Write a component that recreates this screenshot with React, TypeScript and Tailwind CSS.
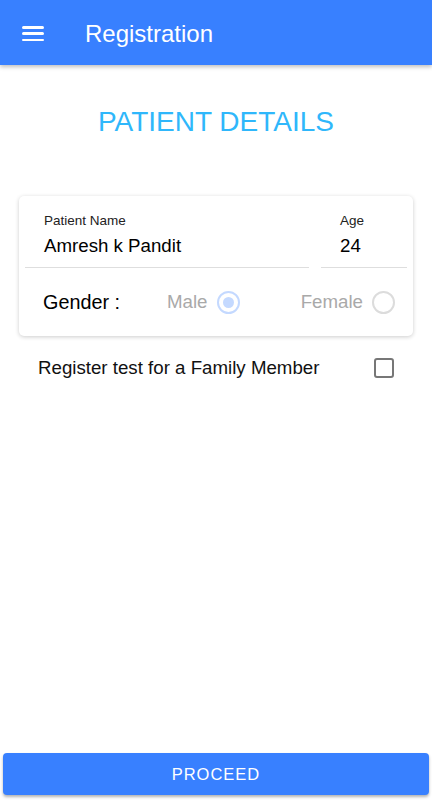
import { useState } from "react";

export default function App() {
  const [gender, setGender] = useState("male");
  const [family, setFamily] = useState(false);

  return (
    <div className="relative flex h-[800px] w-[432px] flex-col bg-white font-['Liberation_Sans',Arial,sans-serif]">
      {/* Header */}
      <div className="z-10 flex h-[65px] items-center bg-[#3880ff] pt-[2px] shadow-[0_2px_4px_rgba(0,0,0,0.25)]">
        <button className="ml-[22px] flex h-[15px] w-[22px] flex-col justify-between">
          <span className="h-[2.5px] w-full rounded bg-white" />
          <span className="h-[2.5px] w-full rounded bg-white" />
          <span className="h-[2.5px] w-full rounded bg-white" />
        </button>
        <h1 className="ml-[41px] text-[24px] leading-none text-white">Registration</h1>
      </div>

      {/* Body */}
      <div className="flex flex-1 flex-col">
        <h2 className="mt-[43px] text-center text-[28px] leading-none text-[#2fb7fb]">PATIENT DETAILS</h2>

        <div className="mx-[19px] mt-[60px] rounded-[5px] bg-white pb-[22px] shadow-[0_1px_4px_rgba(0,0,0,0.2)]">
          <div className="flex gap-[12px] px-[6px] pt-[18px]">
            <div className="flex-1 border-b border-[#dedede] pb-[12px] pl-[19px]">
              <div className="text-[13.5px] leading-none text-[#222]">Patient Name</div>
              <div className="mt-[9px] text-[18.7px] leading-none text-black">Amresh k Pandit</div>
            </div>
            <div className="w-[86px] border-b border-[#dedede] pb-[12px] pl-[19px]">
              <div className="text-[13.5px] leading-none text-[#222]">Age</div>
              <div className="mt-[9px] text-[18.7px] leading-none text-black">24</div>
            </div>
          </div>

          <div className="mt-[23px] flex items-center pl-[24px] pr-[18px]">
            <span className="text-[19.8px] leading-none text-black">Gender :</span>
            <button onClick={() => setGender("male")} className="ml-[47px] flex items-center gap-[9px]">
              <span className="text-[18.7px] leading-none text-[#a9a9a9]">Male</span>
              <span className="flex h-[23px] w-[23px] items-center justify-center rounded-full border-2 border-[#c4d9ff]">
                {gender === "male" && <span className="h-[11px] w-[11px] rounded-full bg-[#c4d9ff]" />}
              </span>
            </button>
            <button onClick={() => setGender("female")} className="ml-auto flex items-center gap-[9px]">
              <span className="text-[18.7px] leading-none text-[#a9a9a9]">Female</span>
              <span className="flex h-[23px] w-[23px] items-center justify-center rounded-full border-2 border-[#dcdcdc]">
                {gender === "female" && <span className="h-[11px] w-[11px] rounded-full bg-[#c4d9ff]" />}
              </span>
            </button>
          </div>
        </div>

        <div className="mt-[22px] flex items-center pl-[38px] pr-[38px]">
          <span className="text-[18.7px] leading-none text-[#111]">Register test for a Family Member</span>
          <button
            onClick={() => setFamily(!family)}
            className={`ml-auto h-[20px] w-[20px] rounded-[3px] border-2 border-[#777] ${family ? "bg-[#3880ff]" : ""}`}
          />
        </div>
      </div>

      {/* Footer button */}
      <div className="px-[3px] pb-[5px]">
        <button className="h-[42px] w-full rounded-[4px] bg-[#3880ff] text-[16.5px] tracking-[1px] text-white shadow-[0_2px_3px_rgba(0,0,0,0.3)]">
          PROCEED
        </button>
      </div>
    </div>
  );
}
